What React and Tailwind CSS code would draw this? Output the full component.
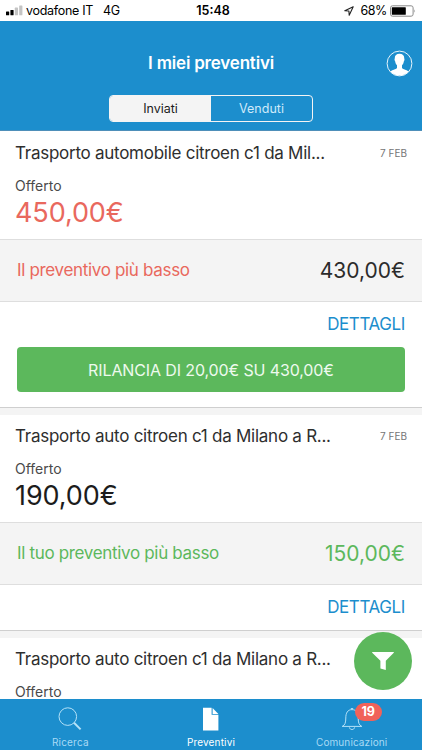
import React from 'react';

const quotes = [
    {
        id: 1,
        title: 'Trasporto automobile citroen c1 da Mil...',
        date: '7 FEB',
        offer: '450,00€',
        offerStyle: 'text-[#e9685d]',
        label: 'Il preventivo più basso',
        labelStyle: 'text-[#e9685d]',
        lowest: '430,00€',
        lowestStyle: 'text-[#2b2b2b]',
        raise: 'RILANCIA DI 20,00€ SU 430,00€',
    },
    {
        id: 2,
        title: 'Trasporto auto citroen c1 da Milano a R...',
        date: '7 FEB',
        offer: '190,00€',
        offerStyle: 'text-[#1c1c1c]',
        label: 'Il tuo preventivo più basso',
        labelStyle: 'text-[#5cb85c]',
        lowest: '150,00€',
        lowestStyle: 'text-[#5cb85c]',
    },
    {
        id: 3,
        title: 'Trasporto auto citroen c1 da Milano a R...',
    },
];

function StatusBar() {
    return (
        <div className="grid h-[21px] shrink-0 grid-cols-[1fr_auto_1fr] items-center bg-white pr-[6px] pl-[6px] text-[12.5px] leading-[21px] text-black">
            <div className="flex items-center">
                <svg width="17" height="11" viewBox="0 0 17 11" className="mr-[3px]">
                    <rect x="0" y="6.5" width="3.2" height="3.8" rx="0.6" fill="#000" />
                    <rect x="4.4" y="5" width="3.2" height="5.3" rx="0.6" fill="#000" />
                    <rect x="8.8" y="2.6" width="3.2" height="7.7" rx="0.6" fill="#c4c4c4" />
                    <rect x="13.2" y="0.4" width="3.2" height="9.9" rx="0.6" fill="#c4c4c4" />
                </svg>
                <span className="tracking-[-0.3px]">vodafone IT</span>
                <span className="ml-[10px] tracking-[-0.3px]">4G</span>
            </div>
            <span className="pl-[4px] font-semibold">15:48</span>
            <div className="flex items-center justify-end">
                <svg width="10" height="10" viewBox="0 0 10 10" className="mr-[6px]">
                    <path d="M9.2 0.8 L0.8 4.8 L4.9 5 L5.2 9.2 Z" fill="none" stroke="#222" strokeWidth="1.1" strokeLinejoin="round" />
                </svg>
                <span className="tracking-[-0.4px]">68%</span>
                <svg width="26" height="12" viewBox="0 0 26 12" className="ml-[3px]">
                    <rect x="0.5" y="0.8" width="22.6" height="10.4" rx="2" fill="none" stroke="#8a8a8a" />
                    <rect x="1.8" y="2.2" width="14" height="7.6" rx="0.6" fill="#000" />
                    <path d="M24.4 4.2 Q25.8 6 24.4 7.8 Z" fill="#8a8a8a" />
                </svg>
            </div>
        </div>
    );
}

function Header() {
    return (
        <header className="flex h-[110px] shrink-0 flex-col border-b border-[#4e8fb9] bg-[#1c8ecd]">
            <div className="mt-[29px] grid h-[27px] grid-cols-[1fr_auto_1fr] items-center px-[9px]">
                <span />
                <h1 className="text-[17px] font-semibold tracking-[-0.2px] text-white">I miei preventivi</h1>
                <svg width="27" height="27" viewBox="0 0 27 27" className="justify-self-end">
                    <circle cx="13.5" cy="13.5" r="12.4" fill="none" stroke="#e6f4fb" strokeWidth="1" />
                    <path
                        d="M13.5 3.8 C10.2 3.8 8.6 5.6 8.8 8.6 C8.3 9 8.5 10.8 9.2 11.4 C9.5 13 10 14.2 11 15.2 V18 C10 19.6 6 19.8 4.4 21.6 A12.4 12.4 0 0 0 22.6 21.6 C21 19.8 17 19.6 16 18 V15.2 C17 14.2 17.5 13 17.8 11.4 C18.5 10.8 18.7 9 18.2 8.6 C18.4 5.6 16.8 3.8 13.5 3.8 Z"
                        fill="#fff"
                    />
                </svg>
            </div>
            <div className="mx-auto mt-[18px] grid h-[27px] w-[204px] grid-cols-2 overflow-hidden rounded-[4px] border border-[#f4f4f4] text-[12.5px]">
                <button className="bg-[#f4f4f4] pt-[2px] text-[#1c1c1c]">Inviati</button>
                <button className="pt-[2px] text-[#cfeafa]">Venduti</button>
            </div>
        </header>
    );
}

function QuoteCard({ quote }) {
    return (
        <article className="shrink-0">
            <div className="flex h-[107px] flex-col bg-white px-[15px] pt-[9px]">
                <div className="flex items-center justify-between">
                    <h2 className="text-[17px] leading-6 tracking-[-0.26px] whitespace-nowrap text-[#2e2e2e]">{quote.title}</h2>
                    {quote.date && <span className="pt-px text-[10px] text-[#757575]">{quote.date}</span>}
                </div>
                <p className="mt-[12px] text-[14px] leading-[18px] text-[#4a4a4a]">Offerto</p>
                {quote.offer && (
                    <p className={`mt-px text-[27px] leading-[34px] tracking-[-0.1px] ${quote.offerStyle}`}>{quote.offer}</p>
                )}
            </div>
            {quote.lowest && (
                <>
                    <div className="flex h-[63px] items-center justify-between border-y border-[#dedede] bg-[#f4f4f4] px-[17px]">
                        <span className={`pt-px text-[17px] tracking-[-0.33px] ${quote.labelStyle}`}>{quote.label}</span>
                        <span className={`text-[21px] ${quote.lowestStyle}`}>{quote.lowest}</span>
                    </div>
                    <div className="bg-white px-[17px]">
                        <div className="flex h-[45px] items-center justify-end">
                            <button className="text-[17px] tracking-[-0.4px] text-[#1c8ecd]">DETTAGLI</button>
                        </div>
                        {quote.raise && (
                            <div className="pb-[15px]">
                                <button className="h-[45px] w-full rounded-[4px] bg-[#5cb85c] text-[16px] tracking-[-0.12px] text-[#eefaee]">
                                    {quote.raise}
                                </button>
                            </div>
                        )}
                    </div>
                    <div className="h-[8px] border-t border-[#cfcfcf] bg-[#f4f4f4]" />
                </>
            )}
        </article>
    );
}

function TabBar() {
    return (
        <nav className="grid h-[51px] shrink-0 grid-cols-3 bg-[#1c8ecd] text-center text-[10px] leading-[13px] text-[#a9daf5]">
            <div className="flex flex-col items-center">
                <svg width="24" height="24" viewBox="0 0 24 24" className="mt-[8px]" fill="none" stroke="#b5e2f8">
                    <circle cx="9.8" cy="9.6" r="8.8" strokeWidth="1" />
                    <path d="M16 15.8 L22.6 22.4" strokeWidth="2" />
                </svg>
                <span className="mt-[5px] tracking-[0.2px]">Ricerca</span>
            </div>
            <div className="flex flex-col items-center text-white">
                <svg width="18" height="24" viewBox="0 0 18 24" className="mt-[8px]" fill="#fff">
                    <path d="M1 0.7 H9.6 V7.8 H16.4 V23.4 H1 Z" />
                    <path d="M10.6 1.1 L16.4 6.9 H10.6 Z" />
                </svg>
                <span className="mt-[5px] tracking-[0.15px]">Preventivi</span>
            </div>
            <div className="flex flex-col items-center">
                <div className="relative mt-[8px]">
                    <svg width="22" height="24" viewBox="0 0 22 24" fill="none" stroke="#b5e2f8" strokeWidth="1">
                        <path d="M1.2 19.4 C4 18.2 4.8 15.6 4.8 11 C4.8 6 6.6 2.6 11 2.6 C15.4 2.6 17.2 6 17.2 11 C17.2 15.6 18 18.2 20.8 19.4 Z" strokeLinejoin="round" />
                        <path d="M8.4 20.4 C8.8 23.2 13.2 23.2 13.6 20.4 M9.8 1.6 H12.2" />
                    </svg>
                    <span className="absolute top-[-4px] left-[14px] h-[18px] w-[27px] rounded-full bg-[#f0625a] text-[12.5px] leading-[18px] font-bold text-white">19</span>
                </div>
                <span className="mt-[5px] tracking-[0.1px]">Comunicazioni</span>
            </div>
        </nav>
    );
}

export default function App() {
    return (
        <div className="relative flex h-[750px] w-[422px] flex-col overflow-hidden bg-[#f4f4f4] font-['Inter',sans-serif]">
            <StatusBar />
            <Header />
            <main className="flex min-h-0 flex-1 flex-col overflow-hidden bg-white pt-px">
                {quotes.map((quote) => (
                    <QuoteCard key={quote.id} quote={quote} />
                ))}
            </main>
            <button className="absolute top-[632px] left-[354px] flex h-[58px] w-[58px] items-center justify-center rounded-full bg-[#5cb85c]">
                <svg width="24" height="20" viewBox="0 0 24 20">
                    <path d="M1.5 1 H22.5 Q23.2 1 22.8 1.7 L14.8 9.8 V19 L9.4 17.6 V9.8 L1.2 1.7 Q0.8 1 1.5 1 Z" fill="#fff" />
                </svg>
            </button>
            <TabBar />
        </div>
    );
}
